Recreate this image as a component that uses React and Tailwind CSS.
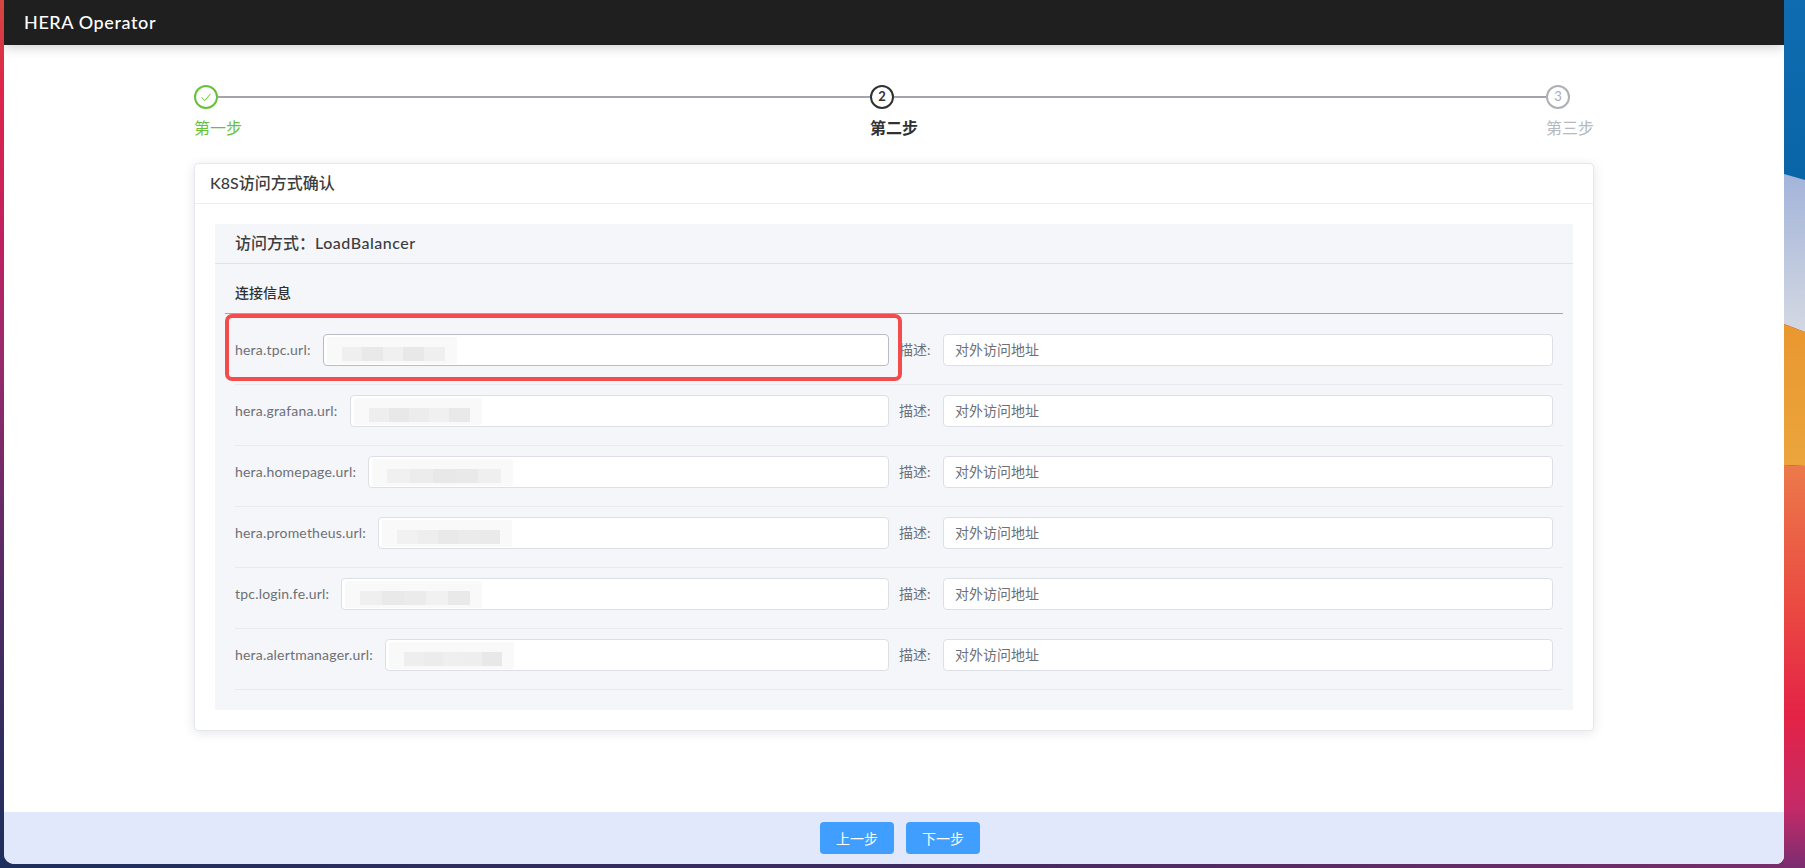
const FONT = "font-['Lato','Noto_Sans_CJK_SC',sans-serif]";

const rows = [
  { label: "hera.tpc.url:", blob: 130, cells: ["#efefef", "#e9e9e9", "#f0f0f0", "#e8e8e8", "#efefef"], active: true },
  { label: "hera.grafana.url:", blob: 128, cells: ["#eeeeee", "#e8e8e8", "#ececec", "#f0f0f0", "#e9e9e9"] },
  { label: "hera.homepage.url:", blob: 141, cells: ["#f0f0f0", "#ececec", "#e8e8e8", "#e9e9e9", "#efefef"] },
  { label: "hera.prometheus.url:", blob: 130, cells: ["#f1f1f1", "#eeeeee", "#e9e9e9", "#ebebeb", "#eaeaea"] },
  { label: "tpc.login.fe.url:", blob: 137, cells: ["#efefef", "#e9e9e9", "#ebebeb", "#f1f1f1", "#e9e9e9"] },
  { label: "hera.alertmanager.url:", blob: 125, cells: ["#eeeeee", "#ececec", "#efefef", "#eeeeee", "#e8e8e8"] },
];

function Step({ state, n, label, last }) {
  const ring = {
    done: "border-[#67c23a] text-[#67c23a]",
    current: "border-[#303133] text-[#303133] font-bold",
    todo: "border-[#adb0b6] text-[#a8abb2]",
  }[state];
  const text = {
    done: "text-[#67c23a]",
    current: "text-[#303133] font-bold",
    todo: "text-[#b6b9c0]",
  }[state];
  return (
    <div className={last ? "w-[48px] shrink-0" : "flex-1"}>
      <div className="flex items-center h-[24px]">
        <div className={`w-[24px] h-[24px] shrink-0 rounded-full border-2 bg-white flex items-center justify-center text-[13px] ${ring}`}>
          {state === "done" ? (
            <svg width="14" height="14" viewBox="0 0 14 14" fill="none" stroke="#67c23a" strokeWidth="1">
              <path d="M2.5 7.5 L5.8 10.5 L11.5 3.8" />
            </svg>
          ) : (
            n
          )}
        </div>
        {!last && <div className="flex-1 h-[2px] bg-[#a3a5ab]" />}
      </div>
      <div className={`mt-[7px] text-[16px] leading-[24px] whitespace-nowrap ${text}`}>{label}</div>
    </div>
  );
}

function Blob({ width, cells }) {
  return (
    <div className="absolute left-[3px] top-[2px] h-[27px] bg-[#f9f9f9] rounded-[2px]" style={{ width }}>
      <div className="absolute left-[15px] right-[12px] top-[10px] h-[14px] flex">
        {cells.map((c, i) => (
          <div key={i} className="flex-1" style={{ backgroundColor: c }} />
        ))}
      </div>
    </div>
  );
}

function Row({ label, blob, cells, active }) {
  return (
    <div className="h-[61px] border-b border-[#e8eaf0] flex items-start pt-[10px] ml-[20px] mr-[10px]">
      <div className="flex-1 flex items-center min-w-0">
        <span className="text-[14px] tracking-[0.2px] leading-[32px] text-[#6d7076] whitespace-nowrap mr-[12px]">{label}</span>
        <div className={`relative flex-1 h-[32px] bg-white rounded-[4px] border ${active ? "border-[#b9bcc6]" : "border-[#dcdfe6]"}`}>
          <Blob width={blob} cells={cells} />
        </div>
      </div>
      <span className="w-[54px] pl-[10px] text-[14px] leading-[32px] text-[#6d7076] whitespace-nowrap">描述:</span>
      <div className="w-[610px] h-[32px] mr-[10px] bg-white rounded-[4px] border border-[#dcdfe6] px-[11px] text-[14px] leading-[30px] text-[#6d7076]">
        对外访问地址
      </div>
    </div>
  );
}

export default function App() {
  return (
    <div className={`h-[868px] w-full overflow-hidden flex bg-[linear-gradient(90deg,#1d2f5c_0%,#3f2a60_50%,#7a2d6c_100%)] ${FONT}`}>
      <div className="w-[4px] h-full shrink-0 bg-[linear-gradient(180deg,#d4483f_0%,#e0244a_10%,#c4205f_26%,#9a2a6c_41%,#6a2a68_58%,#3f2c60_77%,#1c2f5c_100%)]" />
      <div className="relative w-[1780px] h-[864px] shrink-0 bg-white rounded-bl-[10px] rounded-br-[8px] overflow-hidden flex flex-col">
        <header className="h-[45px] shrink-0 bg-[#1f1f1f] flex items-center pl-[20px] text-[18px] font-medium tracking-[0.6px] text-white shadow-[0_2px_12px_rgba(0,0,0,0.2)] z-10">
          HERA Operator
        </header>
        <main className="flex-1 min-h-0 px-[190px] pt-[40px]">
          <div className="flex">
            <Step state="done" label="第一步" />
            <Step state="current" n="2" label="第二步" />
            <Step state="todo" n="3" label="第三步" last />
          </div>
          <section className="relative mt-[23px] h-[568px] border border-[#e4e7ed] rounded-[4px] bg-white shadow-[0_2px_12px_rgba(0,0,0,0.1)]">
            <div className="h-[40px] border-b border-[#ebeef5] pl-[15px] text-[16px] leading-[38px] font-medium text-[#3c3d40]">
              K8S访问方式确认
            </div>
            <div className="mx-[20px] mt-[20px] h-[486px] bg-[#f5f6fa]">
              <div className="h-[40px] border-b border-[#dfe2ea] pl-[20px] text-[16px] leading-[38px] font-medium text-[#3c3d40]">
                访问方式：<span className="tracking-[0.5px]">LoadBalancer</span>
              </div>
              <div className="mx-[10px] h-[50px] border-b border-[#a3a5ab] pl-[10px] pt-[19px] text-[14px] leading-[20px] font-medium text-[#303133]">
                连接信息
              </div>
              <div className="pt-[10px]">
                {rows.map((r) => (
                  <Row key={r.label} {...r} />
                ))}
              </div>
            </div>
            <div className="absolute left-[30px] top-[150px] w-[677px] h-[67px] border-[4px] border-[#f44b4b] rounded-[7px]" />
          </section>
        </main>
        <footer className="h-[52px] shrink-0 bg-[#e2e8fb] flex items-center justify-center gap-[12px] pl-[12px]">
          <button className="w-[74px] h-[32px] rounded-[4px] bg-[#409eff] text-white text-[14px]">上一步</button>
          <button className="w-[74px] h-[32px] rounded-[4px] bg-[#409eff] text-white text-[14px]">下一步</button>
        </footer>
      </div>
      <svg className="flex-1 h-full" viewBox="0 0 21 868" preserveAspectRatio="none">
        <defs>
          <linearGradient id="blue" x1="0" y1="0" x2="0" y2="1"><stop offset="0" stopColor="#0f6cb0" /><stop offset="1" stopColor="#0a65a8" /></linearGradient>
          <linearGradient id="pale" x1="0" y1="0" x2="0" y2="1"><stop offset="0" stopColor="#a3b4da" /><stop offset="1" stopColor="#d3d8e2" /></linearGradient>
          <linearGradient id="orange" x1="0" y1="0" x2="0" y2="1"><stop offset="0" stopColor="#e9972f" /><stop offset="1" stopColor="#eba53c" /></linearGradient>
          <linearGradient id="red" x1="0" y1="0" x2="0" y2="1"><stop offset="0" stopColor="#ec7a4a" /><stop offset="0.35" stopColor="#ea4a42" /><stop offset="0.62" stopColor="#e42346" /><stop offset="0.85" stopColor="#c42a68" /><stop offset="1" stopColor="#7a2d70" /></linearGradient>
        </defs>
        <rect width="21" height="180" fill="url(#blue)" />
        <polygon points="0,174 21,180 21,332 0,324" fill="url(#pale)" />
        <polygon points="0,324 21,332 21,466 0,465" fill="url(#orange)" />
        <polygon points="0,465 21,466 21,868 0,868" fill="url(#red)" />
      </svg>
    </div>
  );
}
